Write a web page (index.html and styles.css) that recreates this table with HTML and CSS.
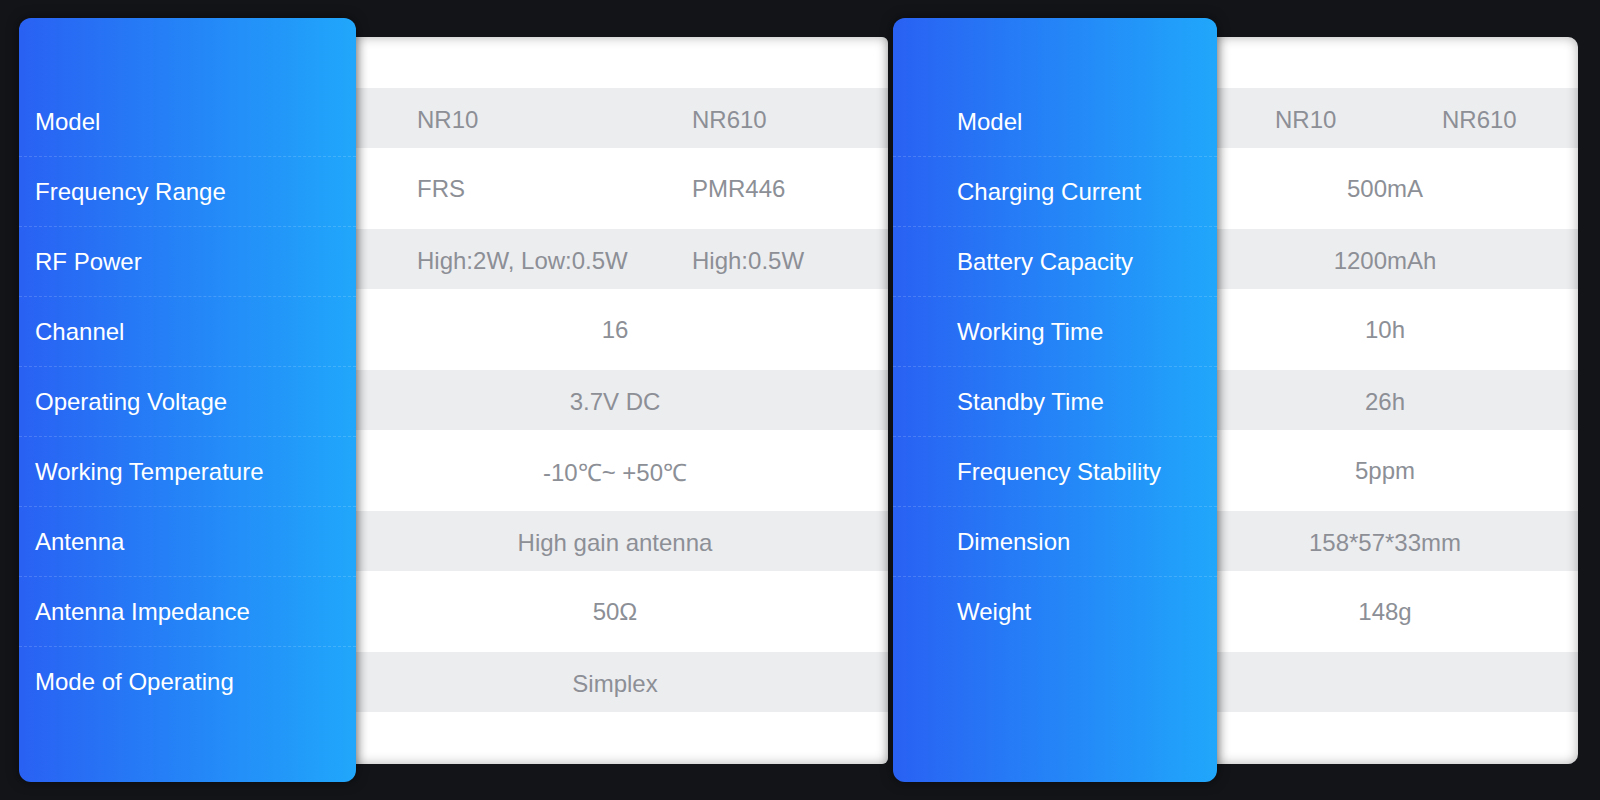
FILE: index.html
```html
<!DOCTYPE html>
<html lang="en">
<head>
    <meta charset="UTF-8">
    <meta name="viewport" content="width=device-width, initial-scale=1.0">
    <title>NR10 / NR610 Specifications</title>
    <link rel="stylesheet" href="styles.css">
</head>
<body>
    <div class="page">
        <!-- General specs -->
        <section class="spec">
            <ul class="labels">
                <li>Model</li>
                <li>Frequency Range</li>
                <li>RF Power</li>
                <li>Channel</li>
                <li>Operating Voltage</li>
                <li>Working Temperature</li>
                <li>Antenna</li>
                <li>Antenna Impedance</li>
                <li>Mode of Operating</li>
            </ul>
            <div class="sheet">
                <div class="row"><span>NR10</span><span>NR610</span></div>
                <div class="row"><span>FRS</span><span>PMR446</span></div>
                <div class="row"><span>High:2W, Low:0.5W</span><span>High:0.5W</span></div>
                <div class="row"><span class="wide">16</span></div>
                <div class="row"><span class="wide">3.7V DC</span></div>
                <div class="row"><span class="wide">-10℃~ +50℃</span></div>
                <div class="row"><span class="wide">High gain antenna</span></div>
                <div class="row"><span class="wide">50Ω</span></div>
                <div class="row"><span class="wide">Simplex</span></div>
            </div>
        </section>

        <!-- Power specs -->
        <section class="spec spec-b">
            <ul class="labels">
                <li>Model</li>
                <li>Charging Current</li>
                <li>Battery Capacity</li>
                <li>Working Time</li>
                <li>Standby Time</li>
                <li>Frequency Stability</li>
                <li>Dimension</li>
                <li>Weight</li>
            </ul>
            <div class="sheet">
                <div class="row"><span>NR10</span><span>NR610</span></div>
                <div class="row"><span class="wide">500mA</span></div>
                <div class="row"><span class="wide">1200mAh</span></div>
                <div class="row"><span class="wide">10h</span></div>
                <div class="row"><span class="wide">26h</span></div>
                <div class="row"><span class="wide">5ppm</span></div>
                <div class="row"><span class="wide">158*57*33mm</span></div>
                <div class="row"><span class="wide">148g</span></div>
                <div class="row"></div>
            </div>
        </section>
    </div>
</body>
</html>
```

FILE: styles.css
```css
body {
    margin: 0;
    background: #121418;
    font-family: "Liberation Sans", Arial, sans-serif;
    font-size: 24px;
}
.page {
    display: flex;
    gap: 5px;
    padding: 18px 22px 18px 19px;
}
.spec {
    display: flex;
    align-items: center;
}
.labels {
    list-style: none;
    margin: 0;
    padding: 69px 0 0;
    width: 337px;
    height: 764px;
    box-sizing: border-box;
    border-radius: 12px;
    background: linear-gradient(90deg, #2961f3 0%, #20a7fb 100%);
    box-shadow: 0 0 12px rgba(0,0,0,0.5);
    color: #fff;
    z-index: 1;
}
.labels li {
    height: 70px;
    box-sizing: border-box;
    display: flex;
    align-items: center;
    padding-left: 16px;
    border-bottom: 1px dashed rgba(255,255,255,0.16);
}
.labels li:last-child { border-bottom: none; }
.sheet {
    position: relative;
    width: 532px;
    height: 727px;
    box-sizing: border-box;
    padding-top: 51px;
    background: #fff;
    border-radius: 0 6px 6px 0;
    overflow: hidden;
}
.sheet::after {
    content: "";
    position: absolute;
    inset: 0;
    border-radius: inherit;
    box-shadow: inset 0 0 12px rgba(0,0,0,0.3);
    pointer-events: none;
}
.row {
    display: grid;
    grid-template-columns: 275px minmax(0, 1fr);
    align-items: center;
    height: 81px;
    box-sizing: border-box;
    padding: 2px 75px 0 61px;
    color: #8c8f96;
    white-space: nowrap;
}
.row:nth-child(odd) {
    height: 60px;
    padding-top: 5px;
    background: #ecedef;
}
.wide {
    grid-column: 1 / -1;
    text-align: center;
}
.spec-b .labels {
    width: 324px;
}
.spec-b .labels li { padding-left: 64px; }
.spec-b .sheet {
    width: 361px;
    border-radius: 0 10px 10px 0;
}
.spec-b .row {
    grid-template-columns: 167px minmax(0, 1fr);
    padding-right: 83px;
    padding-left: 58px;
}
```
